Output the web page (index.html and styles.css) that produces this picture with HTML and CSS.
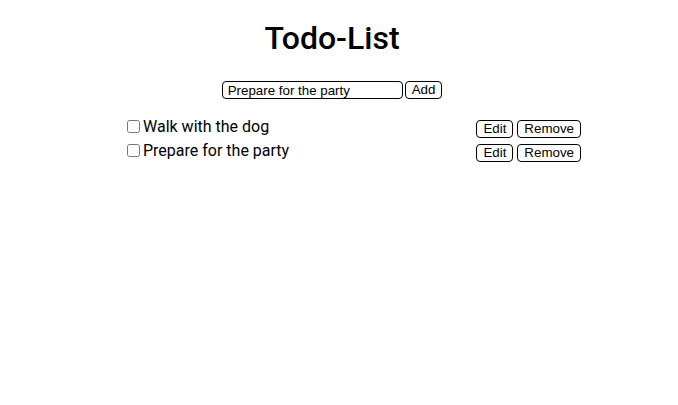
FILE: index.html
```html
<!DOCTYPE html>
<html>
<head>
<meta charset="utf-8">
<link rel="stylesheet" href="styles.css">
</head>
<body>
<div class="app">
  <h1 class="title">Todo-List</h1>
  <form class="add-form">
    <input class="add-input" type="text" value="Prepare for the party">
    <button class="btn" type="button">Add</button>
  </form>
  <ul class="list">
    <li class="item">
      <label class="item-label"><input class="check" type="checkbox"><span>Walk with the dog</span></label>
      <div class="actions"><button class="btn" type="button">Edit</button><button class="btn" type="button">Remove</button></div>
    </li>
    <li class="item">
      <label class="item-label"><input class="check" type="checkbox"><span>Prepare for the party</span></label>
      <div class="actions"><button class="btn" type="button">Edit</button><button class="btn" type="button">Remove</button></div>
    </li>
  </ul>
</div>
</body>
</html>
```
FILE: styles.css
```css
html, body { margin: 0; padding: 0; background: #fff; }
body { font-family: Roboto, "Liberation Sans", sans-serif; color: #000; }
.app { width: 664px; display: flex; flex-direction: column; align-items: center; padding-top: 16px; }
.title { font-size: 32px; font-weight: 500; margin: 0; line-height: 44px; }
.add-form { display: flex; gap: 2px; margin-top: 21px; }
.add-input {
  width: 181px; height: 18px; box-sizing: border-box; border: 1px solid #000; border-radius: 4px;
  font-family: "Liberation Sans", Arial, sans-serif; font-size: 13.33px; padding: 0 5px; margin: 0;
}
.btn {
  height: 18px; box-sizing: border-box; border: 1px solid #000; border-radius: 4px; background: #fff;
  font-family: "Liberation Sans", Arial, sans-serif; font-size: 13.33px; padding: 0 6px; margin: 0; line-height: 16px; color: #000;
}
.list { list-style: none; margin: 18px 0 0 0; padding: 0; width: 454px; position: relative; left: 22px; }
.item { display: flex; justify-content: space-between; align-items: flex-start; height: 24px; }
.item-label { display: flex; align-items: center; font-size: 16px; line-height: 19px; }
.check { width: 13px; height: 13px; margin: 0 3px 0 0; }
.actions { display: flex; gap: 4px; margin-top: 3px; }
```
